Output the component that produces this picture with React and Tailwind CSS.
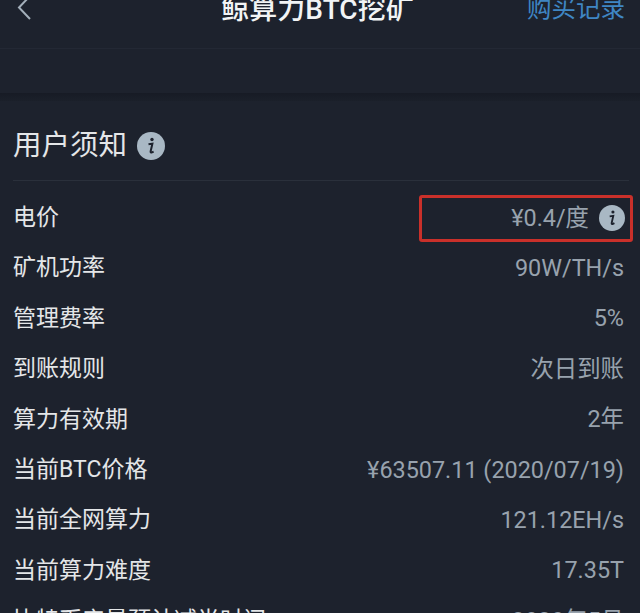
import React from "react";

const rows = [
  { label: "矿机功率", value: "90W/TH/s" },
  { label: "管理费率", value: "5%" },
  { label: "到账规则", value: "次日到账" },
  { label: "算力有效期", value: "2年" },
  { label: "当前BTC价格", value: "¥63507.11 (2020/07/19)" },
  { label: "当前全网算力", value: "121.12EH/s" },
  { label: "当前算力难度", value: "17.35T" },
  { label: "比特币产量预计减半时间", value: "2020年5月" },
];

const InfoIcon = ({ className }) => (
  <svg viewBox="0 0 28 28" className={className}>
    <circle cx="14" cy="14" r="14" fill="#a9b8c4" />
    <circle cx="15" cy="7.5" r="1.7" fill="#1d222d" />
    <path
      d="M11.5 12.2 L15.4 11.6 L13.6 19.5 Q13.4 21 15 20.4 L16.6 19.6"
      fill="none"
      stroke="#1d222d"
      strokeWidth="2"
    />
  </svg>
);

const App = () => {
  return (
    <div className="h-[613px] w-[640px] overflow-hidden bg-[#1d222d] font-['Roboto','Noto_Sans_CJK_SC',sans-serif]">
      {/* header, top is cut off in the screenshot */}
      <div className="relative -mt-[16px] flex h-[65px] items-center justify-between border-b border-[#232834] pl-[17px] pr-[15px]">
        <svg viewBox="0 0 14 26" className="mb-[17px] h-[26px] w-[14px]">
          <path d="M13 1 L2 12.5 L13 24" fill="none" stroke="#a3afba" strokeWidth="2" />
        </svg>
        <div className="absolute inset-x-0 top-0 flex h-[52px] items-center justify-center pr-[5px] text-[28px] font-medium text-[#f2f4f5]">
          鲸算力BTC挖矿
        </div>
        <div className="mb-[13px] text-[24.5px] text-[#3f86c4]">购买记录</div>
      </div>

      <div className="h-[44px]" />
      <div className="h-[8px] bg-gradient-to-b from-[#171b25] to-[#1b202a]" />

      <div className="pl-[13px] pr-[16px]">
        <div className="-mr-[5px] flex h-[80px] items-center gap-[10px] border-b border-[#2a303b] pt-[11px]">
          <span className="text-[28.5px] leading-none text-[#e4e6e8]">用户须知</span>
          <InfoIcon className="h-[28px] w-[28px]" />
        </div>

        <div className="mt-[12px] flex h-[50.4px] items-center justify-between">
          <span className="text-[23px] text-[#e4e6e8]">电价</span>
          <div className="-mr-[9px] flex h-[47px] w-[214px] items-center justify-end gap-[10px] rounded-[3px] border-[3px] border-[#c9302a] pr-[5px]">
            <span className="text-[23.4px] text-[#98a2ad]">¥0.4/度</span>
            <InfoIcon className="h-[26px] w-[26px]" />
          </div>
        </div>

        {rows.map((row) => (
          <div key={row.label} className="flex h-[50.4px] items-center justify-between">
            <span className="text-[23px] text-[#e4e6e8]">{row.label}</span>
            <span className="text-[23.4px] text-[#98a2ad]">{row.value}</span>
          </div>
        ))}
      </div>
    </div>
  );
};

export default App;
